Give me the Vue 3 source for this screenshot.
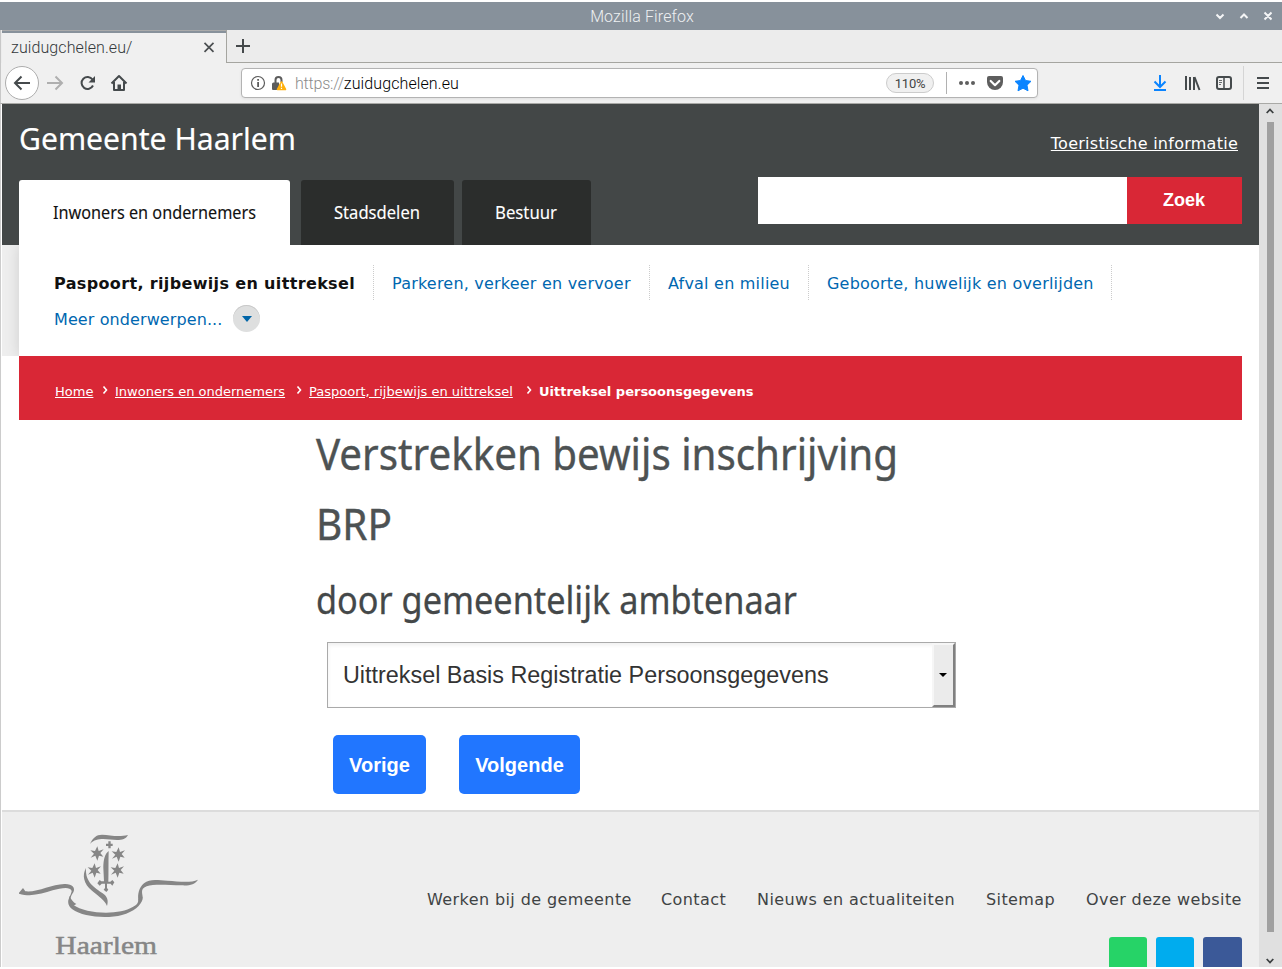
<script setup>
const topics = [
  { label: 'Paspoort, rijbewijs en uittreksel', w: 301, active: true },
  { label: 'Parkeren, verkeer en vervoer', w: 239 },
  { label: 'Afval en milieu', w: 122 },
  { label: 'Geboorte, huwelijk en overlijden', w: 266 },
]
const tabs = [
  { label: 'Inwoners en ondernemers', w: 271, x: 34, t: 203, cls: 'active' },
  { label: 'Stadsdelen', w: 153, x: 33, t: 86, cls: 'second' },
  { label: 'Bestuur', w: 129, x: 33, t: 62, cls: 'third' },
]
const crumbs = [
  { label: 'Home', w: 39, gap: 8 },
  { label: 'Inwoners en ondernemers', w: 169, gap: 12 },
  { label: 'Paspoort, rijbewijs en uittreksel', w: 205, gap: 12 },
]
const links = [
  { label: 'Werken bij de gemeente', w: 204 },
  { label: 'Contact', w: 66 },
  { label: 'Nieuws en actualiteiten', w: 199 },
  { label: 'Sitemap', w: 70 },
  { label: 'Over deze website', w: 156 },
]
const px = (n) => ({ width: n + 'px' })
const star = 'M1,-21 L5,-7 L20,-12 L10,-1 L19,10 L6,7 L1,22 L-5,7 L-19,13 L-9,1 L-20,-9 L-6,-7Z'
const stars = [[291, 100], [355, 103], [283, 151], [352, 151]]
</script>

<template>
  <div class="window">
    <header class="titlebar">
      <span class="wtitle">Mozilla Firefox</span>
      <svg class="wbtns" width="60" height="12" viewBox="0 0 60 12" fill="none" stroke="#f4f5f6" stroke-width="2">
        <path d="M4.500 4.500l3.500 3.500 3.500-3.500M28.500 8l3.500-3.500 3.500 3.500M52.500 2.500l7 7m0-7l-7 7" />
      </svg>
    </header>
    <div class="tabstrip">
      <div class="btab">
        <span>zuidugchelen.eu/</span>
        <svg width="12" height="12" viewBox="0 0 12 12" fill="none" stroke="#4c5052" stroke-width="1.700"><path d="M1.500 .8l9 9m0-9l-9 9" /></svg>
      </div>
      <div class="rest">
        <svg width="14" height="14" viewBox="0 0 14 14" stroke="#45494b" stroke-width="2"><path d="M7 0v14M0 7h14" /></svg>
      </div>
    </div>
    <div class="toolbar">
      <svg class="nav-icons" width="130" height="40" viewBox="2 63 130 40" fill="none" stroke="#454a4c" stroke-width="2">
        <circle cx="22" cy="83" r="16.500" fill="#fff" stroke="#adadad" stroke-width="1" />
        <path d="M30 83H15M21.500 76.500L15 83l6.500 6.500" />
        <path d="M47 83h15M55.500 76.500L62 83l-6.500 6.500" stroke="#afafaf" />
        <path d="M92.500 79.500a6 6 0 1 0 .5 6" />
        <path d="M95 76v6.500h-6.500z" fill="#454a4c" stroke="none" />
        <path d="M111.500 83.500l7.500-7.500 7.500 7.500M114 82v8h10v-8" stroke-linejoin="round" />
        <rect x="117.500" y="84.500" width="3.500" height="5" fill="#454a4c" stroke="none" />
      </svg>
      <div class="urlbar">
        <svg width="38" height="18" viewBox="0 0 38 18">
          <circle cx="8" cy="9" r="6.500" fill="none" stroke="#5c5c5c" stroke-width="1.200" />
          <path d="M7.200 8h1.800v5H7.200zM7.200 5h1.800v1.800H7.200z" fill="#5c5c5c" />
          <path d="M25.500 9.500V6a3 3 0 0 1 6 0V8" fill="none" stroke="#5c5c5c" stroke-width="2" />
          <path d="M22 10q0-1.500 1.500-1.500H29v7.500h-6q-1 0-1-1z" fill="#5c5c5c" />
          <path d="M31.500 8l4 7.500h-8z" fill="#ffb00d" stroke="#ffb00d" stroke-width="1.600" stroke-linejoin="round" />
          <path d="M30.900 9.500h1.200v3.200h-1.200zM30.900 13.700h1.200v1.300h-1.200z" fill="#fff" />
        </svg>
        <span class="url"><i>https://</i>zuidugchelen.eu</span>
        <span class="zoom">110%</span>
        <svg class="page-actions" width="90" height="22" viewBox="945 72 90 22">
          <path d="M946.500 72v22" stroke="#b1b1b1" />
          <g fill="#5e5e5e"><circle cx="961" cy="83" r="2" /><circle cx="967" cy="83" r="2" /><circle cx="973" cy="83" r="2" />
            <path d="M989 76h12q2 0 2 2v4a8 8 0 0 1-16 0v-4q0-2 2-2z" /></g>
          <path d="M990.700 81l4.300 4.200 4.300-4.200" fill="none" stroke="#fff" stroke-width="2.200" stroke-linecap="round" stroke-linejoin="round" />
          <path d="M1023 75.500l2.500 5 5.500.8-4 3.900 1 5.600-5-2.600-5 2.600 1-5.600-4-3.900 5.500-.8z" fill="#0a84ff" stroke="#0a84ff" stroke-linejoin="round" />
        </svg>
      </div>
      <svg class="tool-icons" width="130" height="40" viewBox="1152 63 130 40" fill="none" stroke="#454a4c" stroke-width="2">
        <path d="M1160 75v12M1154.500 81.500l5.500 5.500 5.500-5.500M1154 90h12" stroke="#0a84ff" />
        <path d="M1186 76v14M1190 77v13M1194 77v13" /><path d="M1194.500 77l5 13" />
        <rect x="1217" y="77" width="14" height="12" rx="2" /><path d="M1224 77v12" stroke-width="1.500" />
        <path d="M1219 80.500h3M1219 82.500h3M1219 84.500h2" stroke-width=".8" />
        <path d="M1243.500 66v34" stroke="#d5d5d5" stroke-width="1" />
        <path d="M1257 78h12M1257 83h12M1257 88h12" />
      </svg>
    </div>

    <div class="viewport">
      <main class="page">
        <section class="site-header">
          <div class="brandrow">
            <svg class="brand" width="290" height="48"><text x="17" y="34" textLength="277" lengthAdjust="spacingAndGlyphs">Gemeente Haarlem</text></svg>
            <a class="tourist">Toeristische informatie</a>
          </div>
          <div class="tabrow">
            <div v-for="t in tabs" :key="t.label" class="tab" :class="t.cls" :style="px(t.w)">
              <svg :width="t.w" height="65"><text :x="t.x" y="39" :textLength="t.t" lengthAdjust="spacingAndGlyphs">{{ t.label }}</text></svg>
            </div>
            <div class="search"><div class="field"></div><button>Zoek</button></div>
          </div>
        </section>

        <section class="topics">
          <div class="panel">
            <div class="row">
              <div v-for="t in topics" :key="t.label" class="topic" :class="{ active: t.active }"><span :style="px(t.w)">{{ t.label }}</span></div>
            </div>
            <div class="more"><span>Meer onderwerpen...</span><b><svg width="10" height="6"><path d="M0 0h10L5 6z" fill="#0065a8" /></svg></b></div>
          </div>
        </section>

        <nav class="crumbs">
          <template v-for="c in crumbs" :key="c.label">
            <a :style="px(c.w)">{{ c.label }}</a>
            <svg :style="{ marginLeft: c.gap + 'px' }" width="6" height="8" viewBox="0 0 6 8" fill="none" stroke="#fff" stroke-width="1.600"><path d="M1.500 .5L4.500 4l-3 3.500" /></svg>
          </template>
          <strong>Uittreksel persoonsgegevens</strong>
        </nav>

        <section class="content">
          <svg class="headings" width="640" height="214">
            <g class="h1"><text x="-1" y="50" textLength="582" lengthAdjust="spacingAndGlyphs">Verstrekken bewijs inschrijving</text>
              <text x="-1" y="120" textLength="76" lengthAdjust="spacingAndGlyphs">BRP</text></g>
            <text class="h2" x="-1" y="194" textLength="481" lengthAdjust="spacingAndGlyphs">door gemeentelijk ambtenaar</text>
          </svg>
          <div class="select"><span>Uittreksel Basis Registratie Persoonsgegevens</span><b><svg width="8" height="4"><path d="M0 0h8L4 4z" /></svg></b></div>
          <div class="buttons"><button class="prev">Vorige</button><button class="next">Volgende</button></div>
        </section>

        <footer class="footer">
          <svg class="logo" width="218" height="147" viewBox="6 0 654 441" fill="#868686">
            <path d="M270 72C278 54 289 44 306 44C330 44 351 53 384 45C378 57 367 60 351 60C324 60 292 49 270 72Z" />
            <path d="M325 64h7v7h6v7h-6v7h-7v-7h-7v-7h7z" />
            <path v-for="(s, i) in stars" :key="i" :d="star" :transform="`translate(${s[0]} ${s[1]})`" />
            <path d="M326 93C315 101 310 119 310 143L312 184H304L299 180L292 190L299 197L305 191H315V204L311 209L319 216L325 209L321 204V191H332L337 197L343 187L337 180L331 185H325C326 157 325 126 326 93Z" />
            <path d="M258 144C246 165 250 191 276 212C299 231 315 241 321 258C326 241 322 230 308 220C284 203 255 187 258 144Z" />
            <path d="M57 218L69 204L76 214C112 218 154 193 193 192C217 191 227 204 220 217C210 232 207 245 219 254C259 283 358 286 398 261C410 255 415 249 415 240C413 223 416 204 432 190C449 175 474 181 502 182C536 184 570 190 594 179C584 194 570 197 545 196C506 196 464 191 440 199C417 207 430 224 428 237C424 255 401 276 366 285C321 297 247 291 217 268C192 246 213 230 215 213C209 198 181 206 158 211C127 220 96 232 57 221Z" />
            <path d="M209 228C213 239 219 246 229 252L219 258L206 244ZM415 237L428 230L417 252Z" />
            <text x="166" y="402" font-size="78" textLength="305" lengthAdjust="spacingAndGlyphs">Haarlem</text>
          </svg>
          <div class="flinks"><a v-for="l in links" :key="l.label" :style="px(l.w)">{{ l.label }}</a></div>
          <div class="social"><i class="wa"></i><i class="tw"></i><i class="fb"></i></div>
        </footer>
      </main>
      <aside class="scroll">
        <svg width="8" height="6" fill="none" stroke="#3c4041" stroke-width="1.800"><path d="M.7 5L4 1.500 7.300 5" /></svg>
        <div class="thumb"></div>
        <svg class="down" width="8" height="6" fill="none" stroke="#3c4041" stroke-width="1.800"><path d="M.7 1L4 4.500 7.300 1" /></svg>
      </aside>
    </div>
  </div>
</template>

<style>
body { margin: 0; background: #fff; overflow: hidden; }
</style>
<style scoped>
* { box-sizing: border-box; }
svg { display: block; flex: none; }
a, span, strong { white-space: nowrap; }
.window { width: 1282px; height: 969px; padding: 2px 0; font-family: "DejaVu Sans", sans-serif; overflow: hidden; }
.titlebar { height: 28px; background: #87919b; display: flex; align-items: center; padding-right: 10px; }
.wtitle { flex: 1; text-align: center; padding-left: 72px; font: 300 16px Roboto, sans-serif; letter-spacing: .13px; color: #eef0f2; }
.tabstrip { height: 33px; display: flex; background: #ececec; border-left: 1px solid #c8c8c8; padding-left: 1px; }
.btab { width: 224px; background: #f0f0f0; border-top: 1px solid #aaa; box-shadow: inset 0 2px #87919b; display: flex; align-items: center; justify-content: space-between; padding: 1px 11px 0 9px; font: 300 16px Roboto, sans-serif; letter-spacing: .1px; color: #33383a; }
.rest { flex: 1; border-left: 1px solid #a5a5a0; border-bottom: 1px solid #a5a5a0; padding: 9px 0 0 9px; }
.toolbar { height: 41px; display: flex; align-items: center; background: #f0f0f0; border-bottom: 1px solid #a9a9a6; border-left: 1px solid #c8c8c8; padding-left: 1px; }
.urlbar { margin-left: 109px; width: 797px; height: 30px; background: #fff; border: 1px solid #b3b3b3; border-radius: 4px; box-shadow: 0 1px 3px #0001; display: flex; align-items: center; padding-left: 8px; }
.url { margin-left: 7px; flex: 1; font: 300 16px Roboto, sans-serif; letter-spacing: .1px; color: #000; }
.url i { font-style: normal; color: #8b8b8b; letter-spacing: -.2px; }
.zoom { width: 48px; height: 20px; border: 1px solid #ccc; border-radius: 10px; background: #f0f0f0; font: 13px/19px Roboto, sans-serif; letter-spacing: -.2px; color: #444; text-align: center; margin-right: 11px; }
.page-actions { margin-right: 2px; }
.tool-icons { margin-left: auto; }
.viewport { height: 863px; display: flex; border-left: 1px solid #ccc; padding-left: 1px; }
.page { width: 1257px; background: #fff; overflow: hidden; flex: none; }
.scroll { width: 23px; background: #e0e0e0; display: flex; flex-direction: column; align-items: center; padding: 4px 1px 3px 0; }
.thumb { width: 7px; height: 810px; background: #a0a0a0; margin: 8px 0 0 1px; }
.down { margin-top: auto; }
.site-header { height: 141px; background: #434747; }
.brandrow { height: 73px; display: flex; justify-content: space-between; }
.brand { margin-top: 12px; fill: #fff; stroke: #fff; stroke-width: .15px; font: 31.500px "Noto Sans", sans-serif; overflow: visible; }
.tourist { margin: 30px 21px 0 0; font-size: 16px; line-height: 20px; height: 20px; letter-spacing: .26px; color: #fff; text-decoration: underline; }
.tabrow { display: flex; align-items: flex-start; padding-left: 17px; }
.tab { height: 65px; margin-top: 3px; background: #2b2d2c; border-radius: 3px 3px 0 0; fill: #fff; stroke: #fff; stroke-width: .12px; font: 18.500px "Noto Sans", sans-serif; }
.tab.active { background: #fff; fill: #111; stroke: #111; margin-right: 11px; }
.tab.second { margin-right: 8px; }
.search { display: flex; margin: 0 17px 0 auto; }
.field { width: 369px; height: 47px; background: #fff; }
.search button { width: 115px; border: 0; padding: 0 1px 0 0; background: #d92736; color: #fff; font: bold 18px "Liberation Sans", sans-serif; }
.topics { height: 111px; padding-left: 17px; background: #eee; }
.panel { height: 111px; background: #fff; padding: 20px 0 0 35px; box-shadow: 0 0 14px #0002; clip-path: inset(0 0 0 -17px); }
.row { display: flex; }
.topic { height: 35px; padding-right: 18px; margin-right: 18px; border-right: 1px dotted #ccc; font-size: 16px; line-height: 37px; letter-spacing: .21px; color: #0067b0; }
.topic span { display: block; }
.topic.active { font-weight: bold; letter-spacing: .35px; color: #111; }
.more { display: flex; align-items: center; height: 38px; font-size: 16px; letter-spacing: .1px; color: #0067b0; }
.more b { width: 27px; height: 27px; margin: -1px 0 0 11px; border-radius: 50%; background: #dedfdf; box-shadow: inset 0 1px #c8c8c8; display: flex; align-items: center; justify-content: center; }
.crumbs { width: 1223px; height: 64px; margin-left: 17px; padding: 7px 0 0 36px; background: #d92736; color: #fff; display: flex; align-items: center; font-size: 13px; }
.crumbs a { text-decoration: underline; }
.crumbs svg { margin-right: 7px; margin-top: -3px; }
.content { height: 390px; padding-left: 315px; }
.headings { font-family: "Noto Sans", sans-serif; overflow: visible; }
.h1 { fill: #4d5253; stroke: #4d5253; stroke-width: .4px; font-size: 44px; }
.h2 { fill: #444849; stroke: #444849; stroke-width: .3px; font-size: 38px; }
.select { margin: 8px 0 0 10px; width: 629px; height: 66px; border: 1px solid #aaa; box-shadow: inset 0 2px 4px #0001; display: flex; align-items: center; justify-content: space-between; padding-left: 15px; font: 23.370px "Liberation Sans", sans-serif; color: #333; }
.select b { width: 23px; height: 64px; background: #ebebeb; border: 2px solid #808080; border-top-color: #f6f6f6; border-left-color: #f6f6f6; display: flex; align-items: center; justify-content: center; padding-right: 1px; }
.buttons { display: flex; gap: 33px; margin: 27px 0 0 16px; }
.buttons button { height: 59px; padding: 2px 0 0; border: 0; border-radius: 5px; background: #2176ff; color: #fff; font: bold 20px "Liberation Sans", sans-serif; }
.prev { width: 93px; }
.next { width: 121px; }
.footer { height: 157px; background: #eee; border-top: 2px solid #dcdcdc; display: grid; grid-template-columns: 218px 1fr; grid-template-rows: 78px 47px 30px; }
.logo { grid-row: 1 / 4; margin-top: 8px; font-family: "Liberation Serif", serif; }
.logo text { stroke: #868686; stroke-width: 1.500px; }
.flinks { grid-column: 2; grid-row: 2; display: flex; justify-content: flex-end; gap: 30px; padding-right: 17px; font-size: 16px; line-height: 20px; letter-spacing: .41px; color: #3f4344; }
.social { grid-column: 2; grid-row: 3; display: flex; justify-content: flex-end; gap: 9px; padding-right: 17px; }
.social i { width: 38px; height: 34px; border-radius: 3px 3px 0 0; }
.wa { background: #26d367; }
.tw { background: #00acee; }
.social .fb { width: 39px; background: #3b5998; }
</style>
